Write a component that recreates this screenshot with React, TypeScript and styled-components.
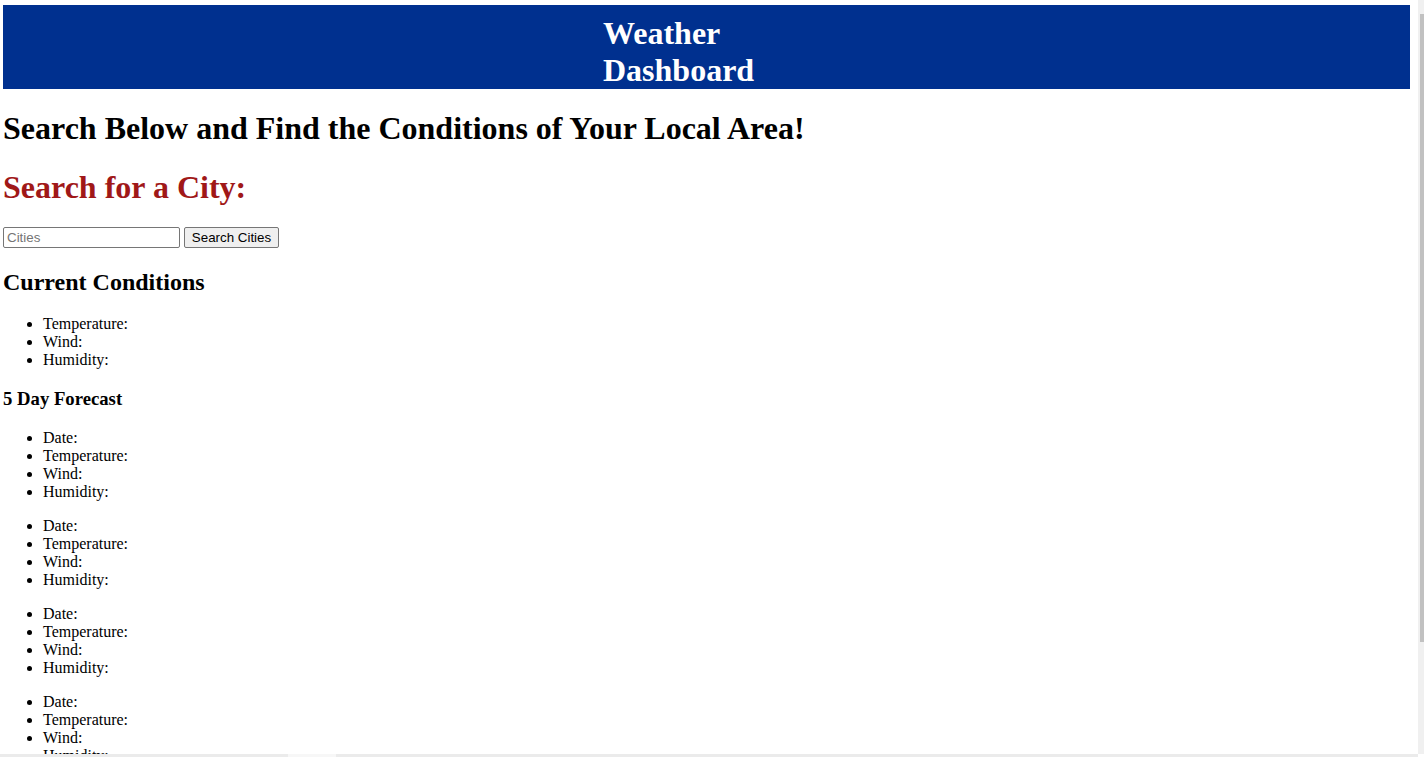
import React from "react";
import styled, { createGlobalStyle } from "styled-components";

const GlobalStyle = createGlobalStyle`
  html {
    scrollbar-width: none;
  }
  html::-webkit-scrollbar {
    display: none;
  }
  body {
    margin: 0;
    padding: 5px 0 0 3px;
    background: #ffffff;
    color: #000000;
    font-family: "Liberation Serif", "Times New Roman", serif;
    font-size: 16px;
  }
`;

const Header = styled.header`
  box-sizing: border-box;
  width: 1407px;
  height: 84px;
  padding-top: 10px;
  background: #00308f;
`;

const HeaderTitle = styled.h1`
  margin: 0 0 0 600px;
  width: 170px;
  font-size: 32px;
  font-weight: bold;
  line-height: normal;
  color: #ffffff;
`;

const Heading = styled.h1<{ $color?: string }>`
  margin: 21.44px 0;
  font-size: 32px;
  font-weight: bold;
  line-height: normal;
  color: ${(p) => p.$color ?? "#000000"};
`;

const SearchRow = styled.form`
  display: flex;
  align-items: flex-start;
  gap: 4px;
  height: 21.35px;
  margin: 0;
`;

const CityInput = styled.input`
  box-sizing: border-box;
  width: 177px;
  height: 21px;
  margin: 0;
  padding: 1px 3px;
  border: 1px solid #767676;
  border-radius: 2px;
  background: #ffffff;
  font-family: "Liberation Sans", Arial, sans-serif;
  font-size: 13.333px;
  color: #000000;
  &::placeholder {
    color: #757575;
  }
`;

const SearchButton = styled.button`
  box-sizing: border-box;
  width: 95px;
  height: 21px;
  margin: 0;
  padding: 1px 6px;
  border: 1px solid #767676;
  border-radius: 2px;
  background: #efefef;
  font-family: "Liberation Sans", Arial, sans-serif;
  font-size: 13.333px;
  color: #000000;
  text-align: center;
`;

const SectionTitle = styled.h2`
  margin: 19.92px 0;
  font-size: 24px;
  font-weight: bold;
  line-height: normal;
`;

const SubTitle = styled.h3`
  margin: 18.72px 0;
  font-size: 18.72px;
  font-weight: bold;
  line-height: normal;
`;

const InfoList = styled.ul`
  margin: 16px 0;
  padding-left: 40px;
  list-style: disc;
`;

const InfoItem = styled.li`
  font-size: 16px;
  line-height: normal;
`;

const VScroll = styled.div`
  position: fixed;
  top: 0;
  right: 0;
  width: 6px;
  height: 754px;
  background: #f0f0f0;
`;

const VThumb = styled.div`
  position: absolute;
  top: 14px;
  left: 2px;
  width: 4px;
  height: 628px;
  background: #c1c1c1;
`;

const HScroll = styled.div`
  position: fixed;
  left: 0;
  bottom: 0;
  width: 1418px;
  height: 3px;
  background: #ebebeb;
`;

const HThumb = styled.div`
  position: absolute;
  top: 0;
  left: 288px;
  width: 48px;
  height: 3px;
  background: #f7f7f7;
`;

const fields = ["Temperature:", "Wind:", "Humidity:"];
const forecastFields = ["Date:", ...fields];

export default function App() {
  return (
    <>
      <GlobalStyle />
      <Header>
        <HeaderTitle>Weather Dashboard</HeaderTitle>
      </Header>
      <Heading>Search Below and Find the Conditions of Your Local Area!</Heading>
      <Heading $color="#a01818">Search for a City:</Heading>
      <SearchRow onSubmit={(e) => e.preventDefault()}>
        <CityInput type="text" placeholder="Cities" />
        <SearchButton type="submit">Search Cities</SearchButton>
      </SearchRow>
      <SectionTitle>Current Conditions</SectionTitle>
      <InfoList>
        {fields.map((f) => (
          <InfoItem key={f}>{f}</InfoItem>
        ))}
      </InfoList>
      <SubTitle>5 Day Forecast</SubTitle>
      {[0, 1, 2, 3, 4].map((d) => (
        <InfoList key={d}>
          {forecastFields.map((f) => (
            <InfoItem key={f}>{f}</InfoItem>
          ))}
        </InfoList>
      ))}
      <VScroll>
        <VThumb />
      </VScroll>
      <HScroll>
        <HThumb />
      </HScroll>
    </>
  );
}
